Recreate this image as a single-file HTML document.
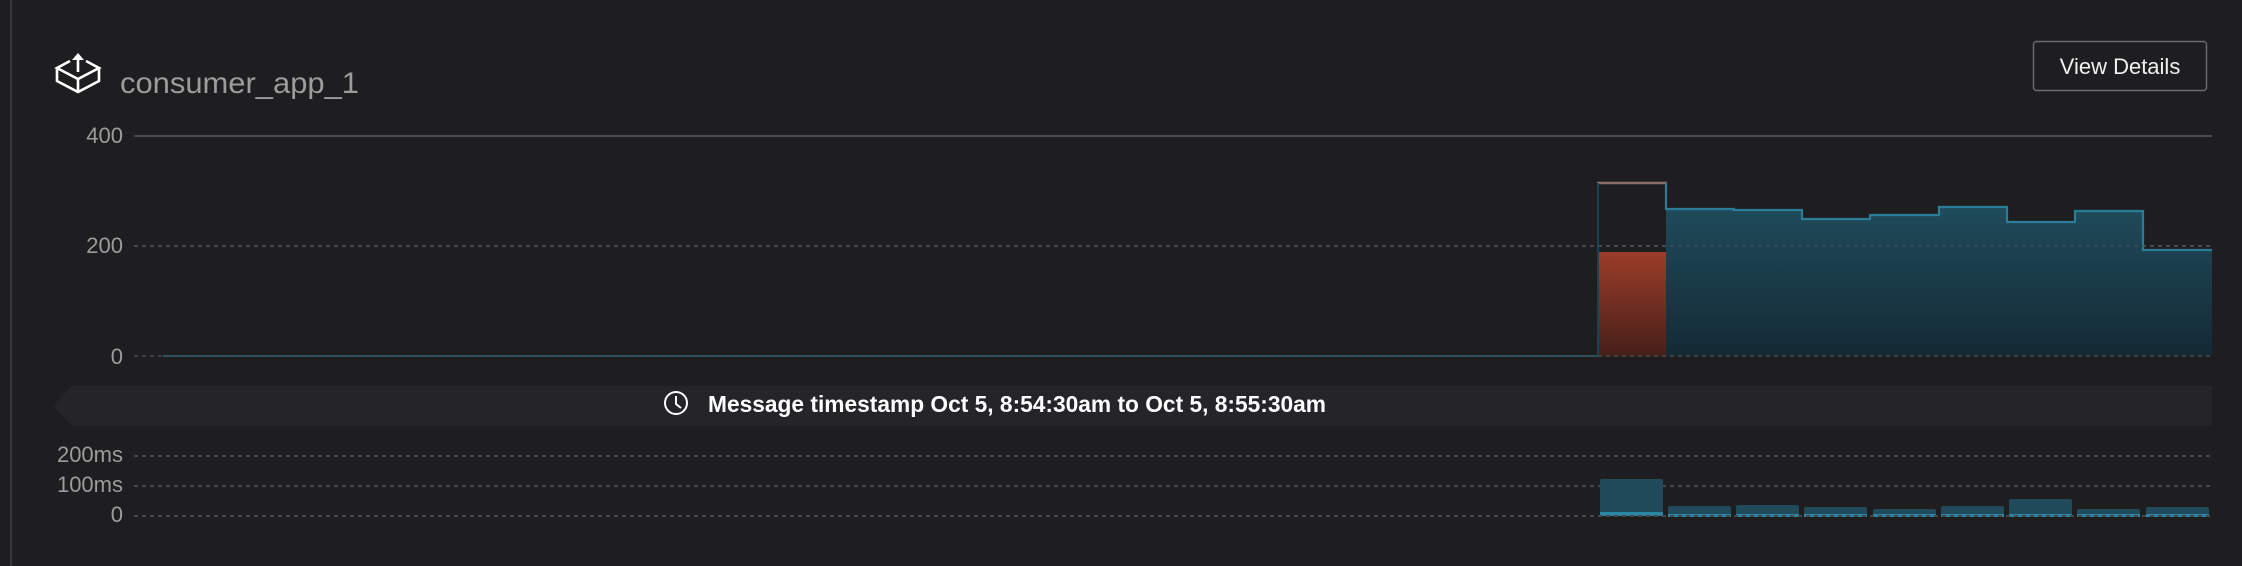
<!DOCTYPE html>
<html><head><meta charset="utf-8"><style>
html,body{margin:0;padding:0;background:#1e1e20;}
svg{display:block;}
text{font-family:"Liberation Sans",sans-serif;}
</style></head><body>
<svg width="2242" height="566" viewBox="0 0 2242 566" xmlns="http://www.w3.org/2000/svg">
<defs>
<linearGradient id="tg" x1="0" y1="0" x2="0" y2="1">
<stop offset="0" stop-color="#1f4b5b"/><stop offset="1" stop-color="#142a35"/></linearGradient>
<linearGradient id="rg" x1="0" y1="0" x2="0" y2="1">
<stop offset="0" stop-color="#9c3c29"/><stop offset="1" stop-color="#46201a"/></linearGradient>
</defs>
<rect width="2242" height="566" fill="#1e1e20"/>
<rect x="10" y="0" width="2" height="566" fill="#38383c"/>
<!-- icon -->
<g fill="none" stroke="#fff" stroke-width="2.6" stroke-linejoin="miter">
<path d="M70,61 L57,68 L78,79 L99,68 L86,61"/>
<path d="M57,68 V81 L78,92 L99,81 V68 M78,79 V92"/>
<path d="M78,72 V56"/>
</g>
<path d="M72,60 L78,53 L84,60 Z" fill="#fff"/>
<text x="120" y="93" font-size="30" fill="#9c9c9c" textLength="239" lengthAdjust="spacingAndGlyphs">consumer_app_1</text>
<!-- button -->
<rect x="2033.5" y="41.5" width="173" height="49" rx="3" fill="none" stroke="#6a6a6c" stroke-width="1.5"/>
<text x="2120" y="74" font-size="22" fill="#f0f0f0" text-anchor="middle">View Details</text>
<!-- main chart axes -->
<g font-size="22" fill="#9c9c9c" text-anchor="end">
<text x="123" y="143">400</text><text x="123" y="253">200</text><text x="123" y="364">0</text>
</g>
<line x1="134" y1="136" x2="2212" y2="136" stroke="#4a4a4c" stroke-width="2"/>
<line x1="134" y1="246" x2="2212" y2="246" stroke="#48484a" stroke-width="2" stroke-dasharray="4 4"/>
<line x1="163" y1="356" x2="1598" y2="356" stroke="#1f5566" stroke-width="2"/>
<!-- red column -->
<rect x="1598" y="252" width="68" height="104" fill="url(#rg)"/>
<line x1="1597" y1="183" x2="1667" y2="183" stroke="#8e6e6c" stroke-width="2.5"/>
<line x1="1598" y1="183" x2="1598" y2="356" stroke="#1d4150" stroke-width="2"/>
<!-- teal steps -->
<path d="M1666,356 V209 H1734 V210 H1802 V219 H1870 V215 H1939 V207 H2007 V222 H2075 V211 H2143 V250 H2212 V356 Z" fill="url(#tg)"/>
<path d="M1666,183 V209 H1734 V210 H1802 V219 H1870 V215 H1939 V207 H2007 V222 H2075 V211 H2143 V250 H2212" fill="none" stroke="#2a7d98" stroke-width="2.2"/>
<line x1="1598" y1="246" x2="2212" y2="246" stroke="#3f5058" stroke-width="2" stroke-dasharray="4 4" opacity="0.6"/>
<line x1="134" y1="356" x2="2212" y2="356" stroke="#48484a" stroke-width="2" stroke-dasharray="4 4" opacity="0.8"/>
<!-- banner -->
<path d="M72,386 H2212 V426 H72 L53,406 Z" fill="#252529"/>
<circle cx="676" cy="403" r="11" fill="none" stroke="#fff" stroke-width="2"/>
<path d="M676,396 V404 L681,408" fill="none" stroke="#fff" stroke-width="2"/>
<text x="708" y="412" font-size="23" font-weight="bold" fill="#fff" textLength="618" lengthAdjust="spacingAndGlyphs">Message timestamp Oct 5, 8:54:30am to Oct 5, 8:55:30am</text>
<!-- lower chart -->
<g font-size="22" fill="#9c9c9c" text-anchor="end">
<text x="123" y="462">200ms</text><text x="123" y="492">100ms</text><text x="123" y="522">0</text>
</g>
<g stroke="#48484a" stroke-width="2" stroke-dasharray="4 4">
<line x1="134" y1="456" x2="2212" y2="456"/><line x1="134" y1="486" x2="2212" y2="486"/>
</g>
<g fill="#214b5b">
<rect x="1600" y="479" width="63" height="37" rx="2"/>
<rect x="1668" y="506" width="63" height="11" rx="2"/>
<rect x="1736" y="505" width="63" height="12" rx="2"/>
<rect x="1804" y="507" width="63" height="10" rx="2"/>
<rect x="1873" y="509" width="63" height="8" rx="2"/>
<rect x="1941" y="506" width="63" height="11" rx="2"/>
<rect x="2009" y="499" width="63" height="18" rx="2"/>
<rect x="2077" y="509" width="63" height="8" rx="2"/>
<rect x="2146" y="507" width="63" height="10" rx="2"/>
</g>
<g fill="#2a86a4">
<rect x="1600" y="512" width="63" height="4"/>
<rect x="1668" y="514" width="63" height="3"/><rect x="1736" y="514" width="63" height="3"/>
<rect x="1804" y="514" width="63" height="3"/><rect x="1873" y="514" width="63" height="3"/>
<rect x="1941" y="514" width="63" height="3"/><rect x="2009" y="514" width="63" height="3"/>
<rect x="2077" y="514" width="63" height="3"/><rect x="2146" y="514" width="63" height="3"/>
</g>
<line x1="134" y1="516" x2="2212" y2="516" stroke="#48484a" stroke-width="2" stroke-dasharray="4 4"/>
</svg>
</body></html>
